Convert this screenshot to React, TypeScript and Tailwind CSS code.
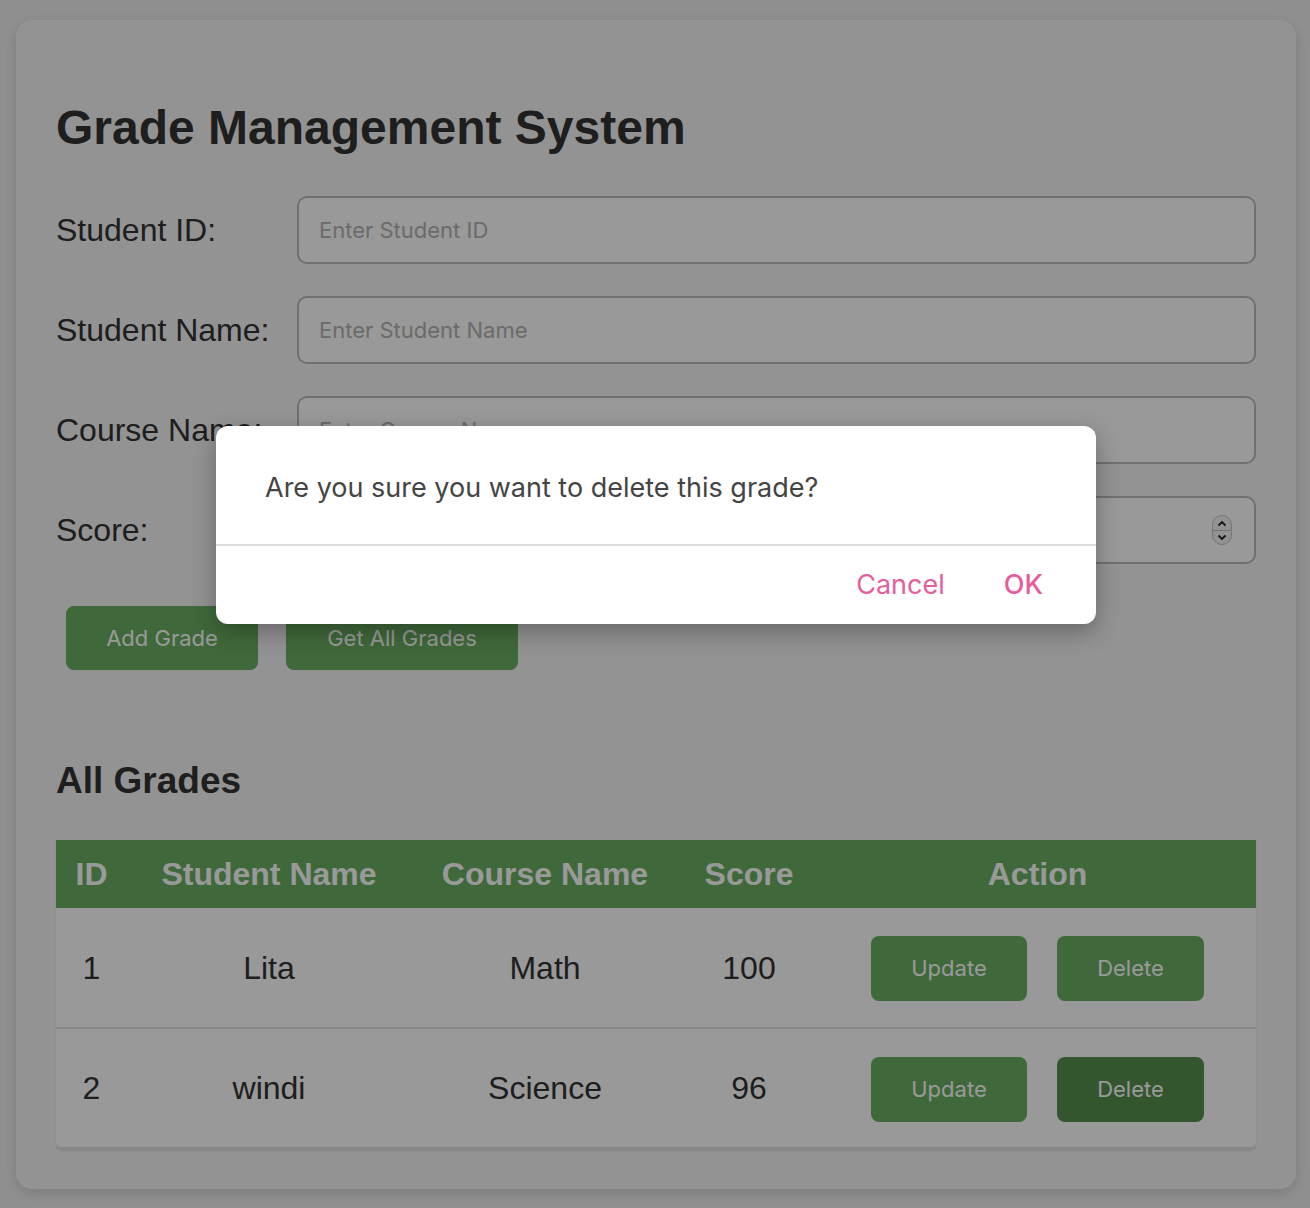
import React from "react";

type Grade = { id: number; name: string; course: string; score: number };

const grades: Grade[] = [
  { id: 1, name: "Lita", course: "Math", score: 100 },
  { id: 2, name: "windi", course: "Science", score: 96 },
];

const fields = [
  { label: "Student ID:", placeholder: "Enter Student ID" },
  { label: "Student Name:", placeholder: "Enter Student Name" },
  { label: "Course Name:", placeholder: "Enter Course Name" },
  { label: "Score:", placeholder: "Enter Score" },
];

function Stepper() {
  return (
    <div className="absolute right-[24px] top-1/2 -translate-y-1/2 w-[20px] h-[30px] rounded-full border border-[#c4c4c4] bg-[#f4f4f4] flex flex-col items-center justify-center">
      <svg width="10" height="7" viewBox="0 0 10 7" className="mb-[3px]">
        <path d="M1.5 5.5 L5 2 L8.5 5.5" fill="none" stroke="#222" strokeWidth="1.8" />
      </svg>
      <div className="w-full h-px bg-[#c4c4c4]" />
      <svg width="10" height="7" viewBox="0 0 10 7" className="mt-[3px]">
        <path d="M1.5 1.5 L5 5 L8.5 1.5" fill="none" stroke="#222" strokeWidth="1.8" />
      </svg>
    </div>
  );
}

export default function App() {
  return (
    <div className="min-h-[1208px] bg-[#eeeeee] pt-[20px] pl-[16px] pr-[14px] relative" style={{ fontFamily: "'Liberation Sans', Arial, sans-serif" }}>
      <div className="bg-[#f5f5f5] rounded-[16px] shadow-[0_4px_12px_rgba(0,0,0,0.12)] px-[40px] pt-[40px] pb-[40px] text-[#333]">
        <h1 className="mt-[40px] mb-[40px] text-[48px] leading-[56px] font-bold">Grade Management System</h1>

        {fields.map((f, i) => (
          <div key={f.label} className={`flex items-center ${i < fields.length - 1 ? "mb-[32px]" : ""}`}>
            <label className="w-[241px] text-[32px] leading-[40px] shrink-0">{f.label}</label>
            <div className="relative flex-1">
              <input
                type="text"
                placeholder={f.placeholder}
                className="w-full h-[68px] bg-white border-2 border-[#bbbbbb] rounded-[10px] px-[20px] text-[22px] outline-none placeholder:text-[#b3b3b3]"
                style={{ fontFamily: "Inter, 'Open Sans', sans-serif" }}
              />
              {i === 3 && <Stepper />}
            </div>
          </div>
        ))}

        <div className="flex mt-[32px] gap-[8px]" style={{ fontFamily: "Inter, 'Open Sans', sans-serif" }}>
          <button className="m-[10px] w-[192px] h-[64px] rounded-[8px] bg-[#6aaf62] text-white text-[22px]">Add Grade</button>
          <button className="m-[10px] w-[232px] h-[64px] rounded-[8px] bg-[#6aaf62] text-white text-[22px]">Get All Grades</button>
        </div>

        <h2 className="mt-[79px] mb-[38px] text-[37px] leading-[43px] font-bold">All Grades</h2>

        <table className="w-full border-collapse rounded-b-[8px] shadow-[0_2px_2px_rgba(0,0,0,0.1)] bg-white">
          <thead>
            <tr className="bg-[#6aaf62] text-white text-[32px] font-bold h-[68px]">
              <th className="w-[71px] text-center">ID</th>
              <th className="w-[284px] text-center">Student Name</th>
              <th className="w-[268px] text-center">Course Name</th>
              <th className="w-[140px] text-center">Score</th>
              <th className="text-center">Action</th>
            </tr>
          </thead>
          <tbody>
            {grades.map((g, i) => (
              <tr key={g.id} className="h-[120px] border-b-2 border-[#e2e2e2] text-[32px] text-center">
                <td>{g.id}</td>
                <td>{g.name}</td>
                <td>{g.course}</td>
                <td>{g.score}</td>
                <td className="pt-[2px]">
                  <div className="flex justify-center gap-[30px]" style={{ fontFamily: "Inter, 'Open Sans', sans-serif" }}>
                    <button className="w-[156px] h-[65px] rounded-[8px] bg-[#6aaf62] text-white text-[22px]">Update</button>
                    <button className={`w-[147px] h-[65px] rounded-[8px] text-white text-[22px] ${i === 1 ? "bg-[#568f4f]" : "bg-[#6aaf62]"}`}>Delete</button>
                  </div>
                </td>
              </tr>
            ))}
          </tbody>
        </table>
      </div>

      {/* modal backdrop */}
      <div className="absolute inset-0 bg-black/40" />

      <div
        className="absolute left-[216px] top-[426px] w-[880px] bg-white rounded-[12px] shadow-[0_8px_24px_rgba(0,0,0,0.3)]"
        style={{ fontFamily: "Inter, 'Open Sans', sans-serif" }}
      >
        <div className="h-[118px] pl-[49px] pt-[45px] text-[27px] leading-[34px] text-[#444]">
          Are you sure you want to delete this grade?
        </div>
        <div className="h-[2px] bg-[#dddddd]" />
        <div className="h-[78px] flex items-center justify-end pr-[53px] gap-[59px] text-[27px] text-[#e55d9b]">
          <button>Cancel</button>
          <button className="font-medium">OK</button>
        </div>
      </div>
    </div>
  );
}
